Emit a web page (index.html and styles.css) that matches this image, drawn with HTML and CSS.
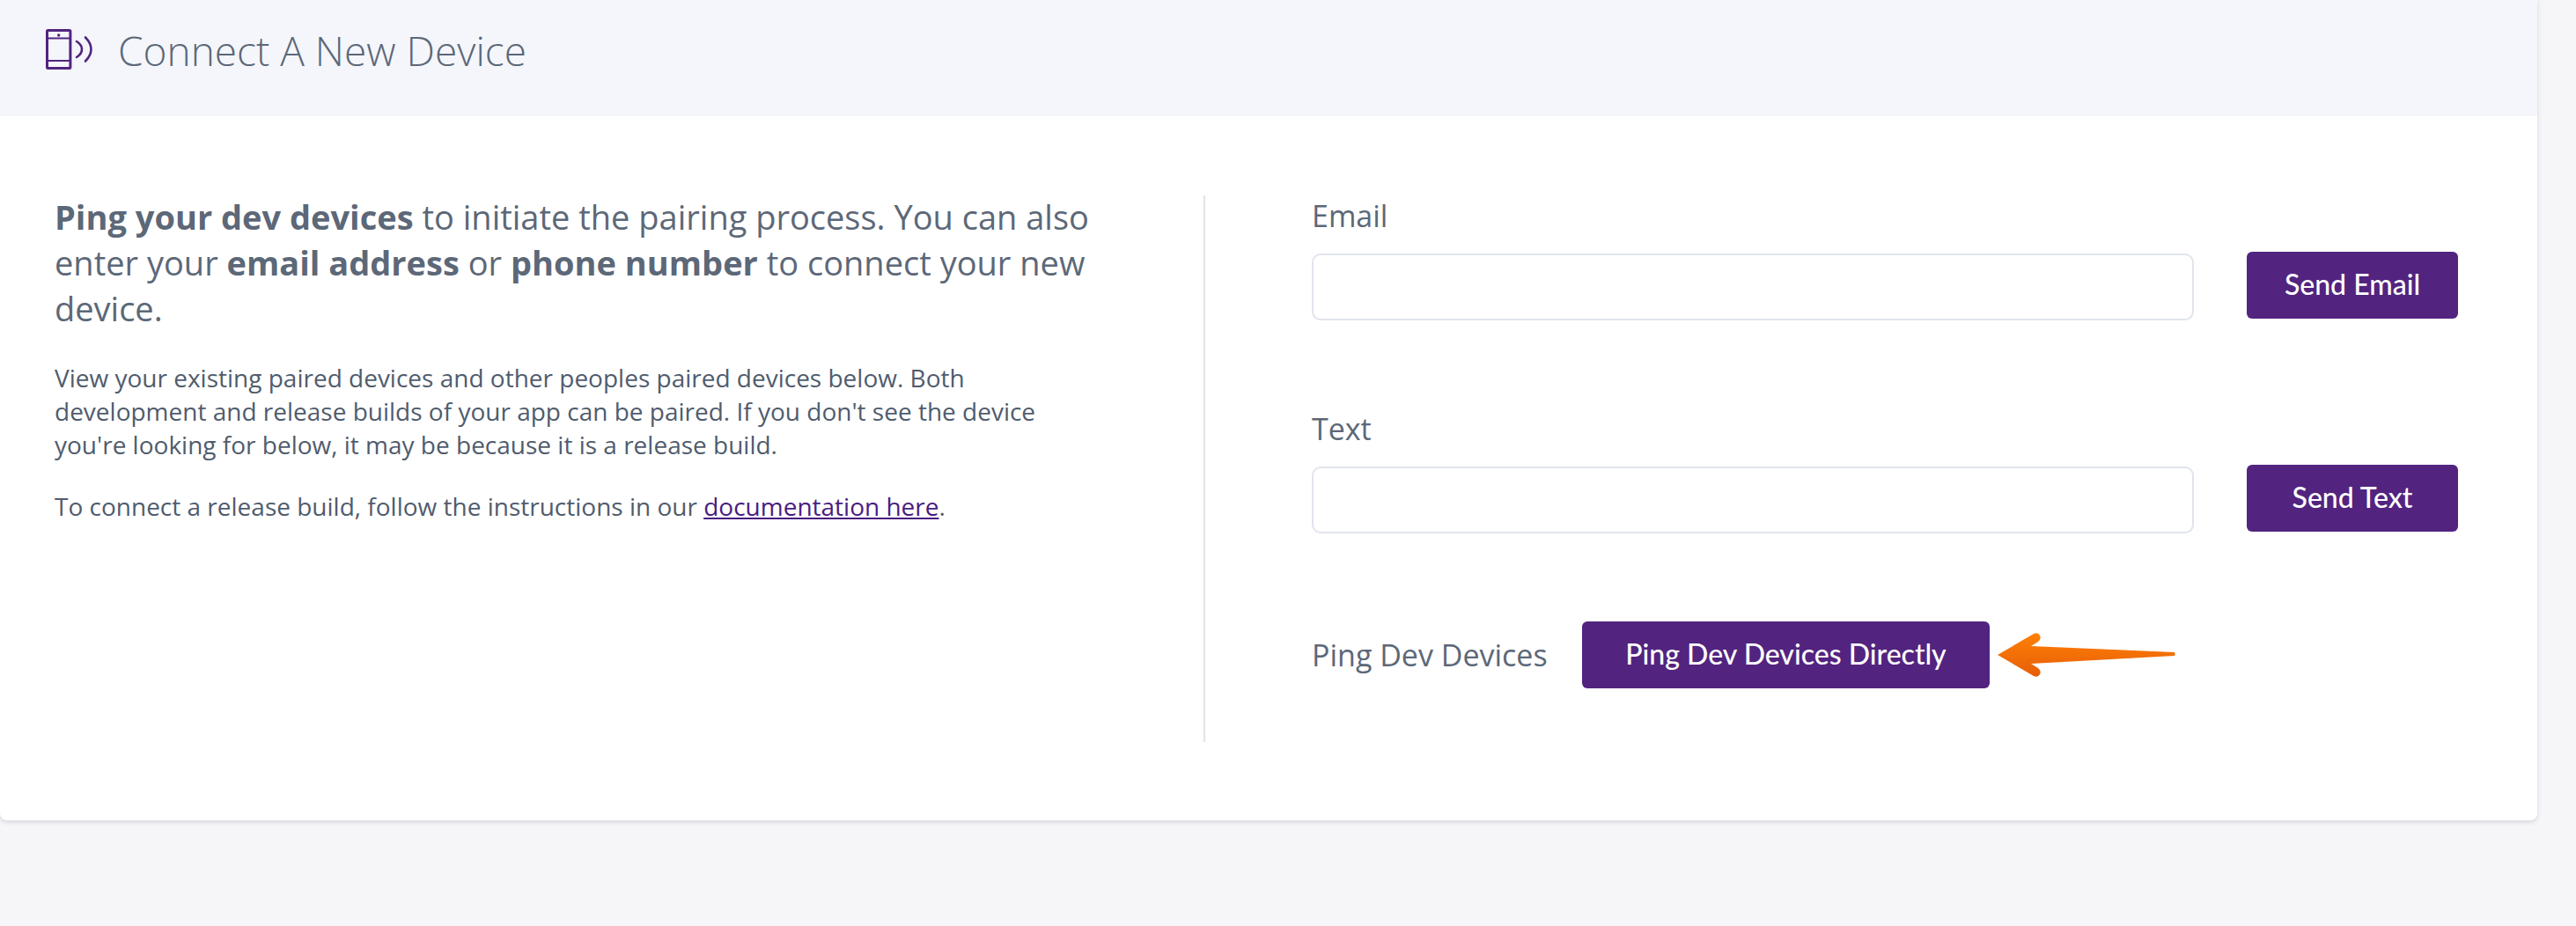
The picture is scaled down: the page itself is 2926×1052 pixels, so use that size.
FILE: index.html
```html
<!DOCTYPE html>
<html lang="en">
<head>
<meta charset="utf-8">
<title>Connect A New Device</title>
<link rel="stylesheet" href="styles.css">
</head>
<body>
<main class="card">
  <header class="card-header">
    <svg class="device-icon" viewBox="0 0 53 46" width="53" height="46" fill="none" stroke="#52247f">
      <rect x="1.500" y="1.500" width="26.400" height="43" rx="1" stroke-width="3"/>
      <path d="M2 10.500h25.500M2 36h25.500" stroke-width="2"/>
      <circle cx="14.700" cy="7" r="1.700" fill="#52247f" stroke="none"/>
      <path d="M35 14c4 2.500 6 5.500 6 9s-2 6.500-6 9" stroke-width="2.600" stroke-linecap="round"/>
      <path d="M45 9.500c4 4 6.500 8.500 6.500 13.500s-2.500 9.500-6.500 13.500" stroke-width="2.600" stroke-linecap="round"/>
    </svg>
    <h1 class="card-title">Connect A New Device</h1>
  </header>
  <div class="card-body">
    <section class="intro">
      <p class="lead"><strong>Ping your dev devices</strong> to initiate the pairing process. You can also enter your <strong>email address</strong> or <strong>phone number</strong> to connect your new device.</p>
      <p class="note">View your existing paired devices and other peoples paired devices below. Both development and release builds of your app can be paired. If you don't see the device you're looking for below, it may be because it is a release build.</p>
      <p class="note">To connect a release build, follow the instructions in our <a href="#">documentation here</a>.</p>
    </section>
    <section class="actions">
      <div class="field">
        <label class="field-label" for="email">Email</label>
        <div class="field-row">
          <input class="field-input" id="email" type="text">
          <button class="btn btn-side">Send Email</button>
        </div>
      </div>
      <div class="field">
        <label class="field-label" for="text">Text</label>
        <div class="field-row">
          <input class="field-input" id="text" type="text">
          <button class="btn btn-side">Send Text</button>
        </div>
      </div>
      <div class="ping-row">
        <span class="field-label ping-label">Ping Dev Devices</span>
        <button class="btn btn-ping">Ping Dev Devices Directly</button>
        <svg class="arrow" viewBox="0 0 202 50" width="202" height="50">
          <defs>
            <linearGradient id="arrowFill" x1="0" y1="0" x2="0" y2="1">
              <stop offset="0" stop-color="#ff8005"/>
              <stop offset="1" stop-color="#e65e08"/>
            </linearGradient>
          </defs>
          <path d="M0 25 L41 1 Q46 -1 48 3 Q50 7 46 10 L38 15 L201 22 Q202 24 201 26 L38 35 L46 40 Q50 43 48 47 Q46 51 41 49 Z" fill="url(#arrowFill)"/>
        </svg>
      </div>
    </section>
  </div>
</main>
</body>
</html>
```

FILE: styles.css
```css
* { box-sizing: border-box; }
html, body { margin: 0; padding: 0; }
body {
  height: 1052px;
  background: #f6f6f9;
  font-family: "Open Sans", sans-serif;
  color: #5a6677;
  overflow: hidden;
}
.card {
  width: 2882px;
  height: 932px;
  background: #fff;
  border-radius: 0 0 8px 8px;
  box-shadow: 0 2px 5px rgba(40, 50, 80, 0.16);
}
.card-header {
  height: 132px;
  background: #f4f6fb;
  display: flex;
  align-items: flex-start;
  padding: 33px 0 0 52px;
  gap: 29px;
}
.device-icon { flex: none; }
.card-title {
  margin: -6px 0 0;
  font-size: 46px;
  line-height: 60px;
  font-weight: 300;
  color: #5c6878;
}
.card-body {
  display: flex;
  padding: 90px 0 0 62px;
}
.intro {
  flex: none;
  width: 1307px;
  height: 621px;
  padding-right: 120px;
  border-right: 2px solid #e2e5eb;
}
.lead {
  margin: -2px 0 34px;
  font-size: 38px;
  line-height: 52px;
  color: #5c6878;
}
.lead strong { font-weight: 700; }
.note {
  margin: 0 0 32px;
  font-size: 28px;
  line-height: 38px;
  color: #505c6d;
}
.note a { color: #4a1c80; }
.actions {
  flex: 1;
  padding: 0 0 0 121px;
}
.field { height: 242px; }
.field-label {
  display: block;
  font-size: 34px;
  line-height: 46px;
  color: #5c6878;
}
.field-row {
  display: flex;
  align-items: flex-start;
  margin-top: 18px;
  gap: 60px;
}
.field-input {
  width: 1002px;
  height: 76px;
  margin-top: 2px;
  border: 2px solid #e1e4ec;
  border-radius: 10px;
  background: #fff;
}
.btn {
  flex: none;
  height: 76px;
  border: 0;
  border-radius: 6px;
  background: #52247f;
  color: #fff;
  font-family: "Lato", sans-serif;
  font-size: 32px;
  font-weight: 500;
  padding: 0 0 3px;
}
.btn-side { width: 240px; }
.ping-row {
  display: flex;
  align-items: center;
}
.ping-label { width: 307px; }
.btn-ping { width: 463px; }
.arrow { margin-left: 9px; flex: none; }
```
